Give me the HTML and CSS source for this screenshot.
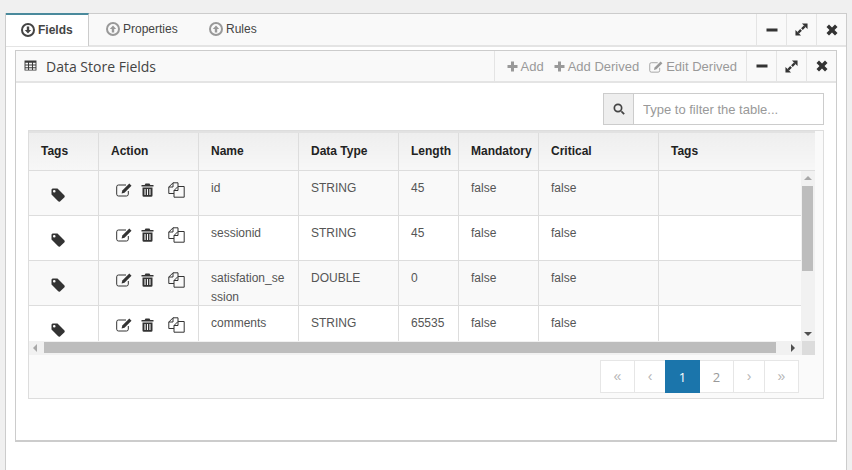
FILE: index.html
```html
<!DOCTYPE html>
<html lang="en">
<head>
<meta charset="utf-8">
<title>Data Store Fields</title>
<link rel="stylesheet" href="styles.css">
</head>
<body>
<svg class="defs" width="0" height="0">
  <symbol id="i-tag" viewBox="0 0 14 14"><path d="M0.5 1.5 L1.5 0.5 L6.5 0.5 L13.5 7.5 Q14 8.5 13.5 9.2 L9 13.5 Q8 14 7.2 13.3 L0.5 6.5 Z M3.2 2 A1.3 1.3 0 1 0 3.3 4.6 A1.3 1.3 0 1 0 3.2 2 Z" fill-rule="evenodd"/></symbol>
  <symbol id="i-edit" viewBox="0 0 16 14"><path d="M10 2 H2.5 Q0.7 2 0.7 3.8 V11.2 Q0.7 13 2.5 13 H10.5 Q12.3 13 12.3 11.2 V8" fill="none" stroke="currentColor" stroke-width="1"/><path d="M13.3 0.5 L15.5 2.7 L8.5 9.7 L5.6 10.4 L6.3 7.5 Z"/></symbol>
  <symbol id="i-trash" viewBox="0 0 13 14"><path d="M4.5 0.5 H8.5 L9.3 2 H12.5 V3.5 H0.5 V2 H3.7 Z M1.5 4.5 H11.5 V12.5 Q11.5 13.8 10.2 13.8 H2.8 Q1.5 13.8 1.5 12.5 Z M3.5 6 V12 H4.6 V6 Z M6 6 V12 H7 V6 Z M8.4 6 V12 H9.5 V6 Z" fill-rule="evenodd"/></symbol>
  <symbol id="i-copy" viewBox="0 0 17 16"><path d="M6 11.5 H0.8 V5 L5 0.8 H10 V4.5 M5 0.8 V5 H0.8" fill="none" stroke="currentColor" stroke-width="1"/><path d="M10 4.5 H16.2 V15.2 H6 V8.5 Z M10 4.5 V8.5 H6" fill="none" stroke="currentColor" stroke-width="1"/></symbol>
  <symbol id="i-table" viewBox="0 0 14 12"><path d="M0.5 0.5 H13.5 V11.5 H0.5 Z M1.5 3 V5 H4.3 V3 Z M5.4 3 V5 H8.6 V3 Z M9.7 3 V5 H12.5 V3 Z M1.5 6 V8 H4.3 V6 Z M5.4 6 V8 H8.6 V6 Z M9.7 6 V8 H12.5 V6 Z M1.5 9 V10.5 H4.3 V9 Z M5.4 9 V10.5 H8.6 V9 Z M9.7 9 V10.5 H12.5 V9 Z" fill-rule="evenodd"/></symbol>
  <symbol id="i-down" viewBox="0 0 14 14"><path d="M7 0 A7 7 0 1 0 7 14 A7 7 0 1 0 7 0 Z M7 2 A5 5 0 1 1 7 12 A5 5 0 1 1 7 2 Z M5.8 3.5 V7 H3.8 L7 10.6 L10.2 7 H8.2 V3.5 Z" fill-rule="evenodd"/></symbol>
  <symbol id="i-up" viewBox="0 0 14 14"><path d="M7 0 A7 7 0 1 0 7 14 A7 7 0 1 0 7 0 Z M7 2 A5 5 0 1 1 7 12 A5 5 0 1 1 7 2 Z M5.8 10.5 V7 H3.8 L7 3.4 L10.2 7 H8.2 V10.5 Z" fill-rule="evenodd"/></symbol>
  <symbol id="i-min" viewBox="0 0 12 12"><rect x="0.5" y="4.5" width="11" height="3"/></symbol>
  <symbol id="i-exp" viewBox="0 0 14 14"><path d="M7.5 0.5 H13.5 V6.5 Z M0.5 7.5 V13.5 H6.5 Z"/><path d="M10.5 3.5 L7.5 6.5 M3.5 10.5 L6.5 7.5" fill="none" stroke="currentColor" stroke-width="2.6"/></symbol>
  <symbol id="i-x" viewBox="0 0 12 12"><path d="M0.5 3 L3 0.5 L6 3.5 L9 0.5 L11.5 3 L8.5 6 L11.5 9 L9 11.5 L6 8.5 L3 11.5 L0.5 9 L3.5 6 Z"/></symbol>
  <symbol id="i-plus" viewBox="0 0 11 11"><path d="M4 0.5 H7 V4 H10.5 V7 H7 V10.5 H4 V7 H0.5 V4 H4 Z"/></symbol>
  <symbol id="i-search" viewBox="0 0 12 12"><path d="M5 0.5 A4.5 4.5 0 1 0 5 9.5 A4.5 4.5 0 1 0 5 0.5 Z M5 2.2 A2.8 2.8 0 1 1 5 7.8 A2.8 2.8 0 1 1 5 2.2 Z M7.8 8.9 L9 7.7 L11.8 10.4 L10.5 11.7 Z" fill-rule="evenodd"/></symbol>
</svg>

<main class="outer">
  <header class="tabbar">
    <nav class="tabs">
      <a class="tab active"><svg class="tab-ic"><use href="#i-down"/></svg>Fields</a>
      <a class="tab"><svg class="tab-ic muted"><use href="#i-up"/></svg>Properties</a>
      <a class="tab"><svg class="tab-ic muted"><use href="#i-up"/></svg>Rules</a>
    </nav>
    <div class="winbtns">
      <button class="winbtn"><svg class="wi"><use href="#i-min"/></svg></button>
      <button class="winbtn"><svg class="wi-exp"><use href="#i-exp"/></svg></button>
      <button class="winbtn"><svg class="wi"><use href="#i-x"/></svg></button>
    </div>
  </header>

  <section class="panel">
    <header class="panel-head">
      <h2 class="panel-title"><svg class="title-ic"><use href="#i-table"/></svg>Data Store Fields</h2>
      <div class="actions">
        <a class="action"><svg class="plus"><use href="#i-plus"/></svg>Add</a>
        <a class="action"><svg class="plus"><use href="#i-plus"/></svg>Add Derived</a>
        <a class="action"><svg class="plus edit"><use href="#i-edit"/></svg>Edit Derived</a>
      </div>
      <div class="winbtns">
        <button class="winbtn"><svg class="wi"><use href="#i-min"/></svg></button>
        <button class="winbtn"><svg class="wi-exp"><use href="#i-exp"/></svg></button>
        <button class="winbtn"><svg class="wi"><use href="#i-x"/></svg></button>
      </div>
    </header>

    <div class="panel-body">
      <div class="filter-row">
        <div class="filter">
          <span class="filter-addon"><svg class="search"><use href="#i-search"/></svg></span>
          <input class="filter-input" type="text" placeholder="Type to filter the table...">
        </div>
      </div>

      <div class="grid-box">
        <div class="grid-scroll">
          <table class="grid head">
            <colgroup><col class="c1"><col class="c2"><col class="c3"><col class="c4"><col class="c5"><col class="c6"><col class="c7"><col class="c8"></colgroup>
            <thead><tr><th>Tags</th><th>Action</th><th>Name</th><th>Data Type</th><th>Length</th><th>Mandatory</th><th>Critical</th><th>Tags</th></tr></thead>
          </table>
          <div class="body-row">
            <div class="viewport">
              <table class="grid rows">
                <colgroup><col class="c1"><col class="c2"><col class="c3"><col class="c4"><col class="c5"><col class="c6"><col class="c7"><col class="c8b"></colgroup>
                <tbody>
                  <tr>
                    <td class="tagcell"><svg class="tag"><use href="#i-tag"/></svg></td>
                    <td><div class="acts"><svg class="a-edit"><use href="#i-edit"/></svg><svg class="a-trash"><use href="#i-trash"/></svg><svg class="a-copy"><use href="#i-copy"/></svg></div></td>
                    <td>id</td><td>STRING</td><td>45</td><td>false</td><td>false</td><td></td>
                  </tr>
                  <tr>
                    <td class="tagcell"><svg class="tag"><use href="#i-tag"/></svg></td>
                    <td><div class="acts"><svg class="a-edit"><use href="#i-edit"/></svg><svg class="a-trash"><use href="#i-trash"/></svg><svg class="a-copy"><use href="#i-copy"/></svg></div></td>
                    <td>sessionid</td><td>STRING</td><td>45</td><td>false</td><td>false</td><td></td>
                  </tr>
                  <tr>
                    <td class="tagcell"><svg class="tag"><use href="#i-tag"/></svg></td>
                    <td><div class="acts"><svg class="a-edit"><use href="#i-edit"/></svg><svg class="a-trash"><use href="#i-trash"/></svg><svg class="a-copy"><use href="#i-copy"/></svg></div></td>
                    <td><div class="wrapped">satisfation_session</div></td><td>DOUBLE</td><td>0</td><td>false</td><td>false</td><td></td>
                  </tr>
                  <tr>
                    <td class="tagcell"><svg class="tag"><use href="#i-tag"/></svg></td>
                    <td><div class="acts"><svg class="a-edit"><use href="#i-edit"/></svg><svg class="a-trash"><use href="#i-trash"/></svg><svg class="a-copy"><use href="#i-copy"/></svg></div></td>
                    <td>comments</td><td>STRING</td><td>65535</td><td>false</td><td>false</td><td></td>
                  </tr>
                </tbody>
              </table>
            </div>
            <div class="vbar">
              <span class="arrow-up"></span>
              <div class="vtrack"><div class="vthumb"></div></div>
              <span class="arrow-down"></span>
            </div>
          </div>
          <div class="hbar">
            <span class="arrow-left"></span>
            <div class="hthumb"></div>
            <span class="arrow-right"></span>
            <div class="corner"></div>
          </div>
        </div>
        <footer class="grid-foot">
          <ul class="pager">
            <li class="pg w-a arrow">«</li>
            <li class="pg w-b arrow">‹</li>
            <li class="pg w-a current">1</li>
            <li class="pg w-a num">2</li>
            <li class="pg w-b arrow">›</li>
            <li class="pg w-c arrow">»</li>
          </ul>
        </footer>
      </div>
    </div>
  </section>
</main>
</body>
</html>
```
FILE: styles.css
```css
* { box-sizing: border-box; }
html, body { height: 100%; }
body {
  margin: 0;
  height: 470px;
  overflow: hidden;
  background: #f0f0f0;
  padding: 13px 5px 0;
  font-family: "Liberation Sans", Arial, sans-serif;
  font-size: 12px;
  color: #555;
}
.defs { position: absolute; }
svg { fill: currentColor; display: block; flex: none; }

.outer {
  height: 457px;
  width: 842px;
  background: #fff;
  border: 1px solid #ccc;
  border-bottom: 0;
}
.tabbar {
  height: 33px;
  display: flex;
  justify-content: space-between;
  background: #f9f9f9;
  border-bottom: 2px solid #e4e4e4;
}
.tabs { display: flex; }
.tab {
  display: flex;
  align-items: center;
  height: 31px;
  color: #444;
  gap: 3px;
  width: 103px;
  padding: 0 0 2px 17px;
}
.tab.active {
  width: 83px;
  height: 33px;
  background: #fff;
  border-top: 2px solid #4a8a9c;
  border-right: 1px solid #ccc;
  font-weight: 700;
  padding: 0 0 1px 15px;
  margin-top: -1px;
}
.tab-ic { width: 14px; height: 14px; color: #444; }
.tab-ic.muted { color: #999; }

.winbtns { display: flex; }
.winbtn {
  width: 30px;
  padding: 0;
  border: 0;
  border-left: 1px solid #e4e4e4;
  background: transparent;
  color: #333;
  display: flex;
  align-items: center;
  justify-content: center;
}
.wi { width: 12px; height: 12px; }
.wi-exp { width: 13px; height: 13px; }

.panel {
  margin: 3px 9px 0;
  height: 392px;
  border: 1px solid #ccc;
  border-bottom: 2px solid #ccc;
  background: #fff;
}
.panel-head {
  height: 32px;
  display: flex;
  align-items: stretch;
  background: #f9f9f9;
  border-bottom: 2px solid #e4e4e4;
}
.panel-title {
  margin: 0;
  flex: 1;
  display: flex;
  align-items: center;
  padding-left: 8px;
  font: 400 14px "Open Sans", sans-serif;
  color: #444;
}
.title-ic { width: 13px; height: 11px; margin: -2px 9px 0 0; color: #3a3a3a; }
.actions {
  display: flex;
  align-items: center;
  gap: 10px;
  padding: 0 9px 0 12px;
  border-left: 1px solid #e4e4e4;
  color: #999;
  font-size: 13px;
}
.action { display: flex; align-items: center; gap: 3px; }
.plus { width: 11px; height: 11px; margin-top: 1px; }
.plus.edit { width: 14px; height: 12px; }

.panel-body { padding: 10px 12px 0; }
.filter-row { display: flex; justify-content: flex-end; }
.filter { display: flex; width: 221px; height: 32px; border: 1px solid #ccc; }
.filter-addon {
  width: 30px;
  background: #eee;
  border-right: 1px solid #ccc;
  display: flex;
  align-items: center;
  justify-content: center;
}
.search { width: 12px; height: 12px; color: #444; }
.filter-input {
  flex: 1;
  min-width: 0;
  border: 0;
  outline: 0;
  padding: 0 9px;
  font: 13px "Liberation Sans", Arial, sans-serif;
  background: #fff;
}
.filter-input::placeholder { color: #999; opacity: 1; }

.grid-box {
  margin-top: 5px;
  height: 269px;
  border: 1px solid #ddd;
  background: #fafafa;
}
.grid-scroll { width: 786px; height: 224px; background: #fff; }
.grid { border-collapse: collapse; table-layout: fixed; }
.head { width: 786px; }
.rows { width: 772px; }
.c1 { width: 69px; }
.c2, .c3, .c4 { width: 100px; }
.c5 { width: 60px; }
.c6 { width: 80px; }
.c7 { width: 120px; }
.c8 { width: 157px; }
.c8b { width: 143px; }
.grid th {
  height: 38px;
  padding: 0 12px 0 12.5px;
  text-align: left;
  font-weight: 700;
  color: #222;
  background: linear-gradient(#eee, #f7f7f7);
  border-top: 2px solid #e2e2e2;
  border-left: 1px solid #ddd;
  border-bottom: 1px solid #ddd;
}
.grid th:first-child { border-left: 0; padding-left: 12px; }
.grid td:first-child { border-left: 0; padding-left: 12px; }
.grid td {
  height: 45px;
  padding: 8px 12px 0 12.5px;
  vertical-align: top;
  line-height: 19px;
  word-break: break-all;
  border-left: 1px solid #ddd;
  border-bottom: 1px solid #ddd;
}
.grid tbody tr:nth-child(odd) td { background: #f9f9f9; }
.wrapped { height: 36px; }

.tag { width: 14px; height: 14px; margin: 9px 0 0 10px; color: #333; }
.acts { display: flex; align-items: center; padding: 3px 0 0 5px; color: #333; }
.a-edit { width: 16px; height: 14px; }
.a-trash { width: 13px; height: 14px; margin-left: 9px; }
.a-copy { width: 17px; height: 16px; margin-left: 14px; }

.body-row { display: flex; height: 170px; }
.viewport { width: 772px; height: 170px; overflow: hidden; }
.vbar {
  width: 14px;
  background: #f1f1f1;
  display: flex;
  flex-direction: column;
  align-items: center;
}
.vtrack { flex: 1; width: 100%; padding: 0 2px 0 1px; }
.vthumb { height: 85px; background: #bdbdbd; }
.arrow-up, .arrow-down, .arrow-left, .arrow-right { display: block; width: 0; height: 0; flex: none; border-style: solid; border-color: transparent; }
.arrow-up { border-width: 0 4px 4px; border-bottom-color: #a8a8a8; margin: 5px 0 6px; }
.arrow-down { border-width: 4px 4px 0; border-top-color: #505050; margin: 5px 0; }

.hbar { height: 14px; background: #f1f1f1; display: flex; align-items: center; }
.arrow-left { border-width: 4px 4px 4px 0; border-right-color: #a8a8a8; margin: 0 7px 0 4px; }
.hthumb { width: 732px; height: 11px; background: #bdbdbd; flex: none; }
.arrow-right { border-width: 4px 0 4px 4px; border-left-color: #505050; margin: 0 7px 0 15px; }
.corner { width: 14px; height: 14px; background: #dcdcdc; margin-left: auto; }

.grid-foot { display: flex; justify-content: flex-end; padding: 5px 24px 0 0; }
.pager { display: flex; list-style: none; margin: 0; padding: 0; }
.pg {
  height: 33px;
  display: flex;
  align-items: center;
  justify-content: center;
  background: #fff;
  border: 1px solid #e6e6e6;
  margin-left: -1px;
  color: #aaa;
  font-size: 13px;
  font-family: "Open Sans", sans-serif;
}
.pg.arrow { font-size: 14px; font-family: "Liberation Sans", sans-serif; padding-bottom: 2px; color: #b5b5b5; }
.w-a { width: 35px; }
.w-b { width: 32px; }
.w-c { width: 35px; }
.pg.current { background: #1b75ab; border-color: #1b75ab; color: #fff; position: relative; }
.pg.num { color: #999; }
```
